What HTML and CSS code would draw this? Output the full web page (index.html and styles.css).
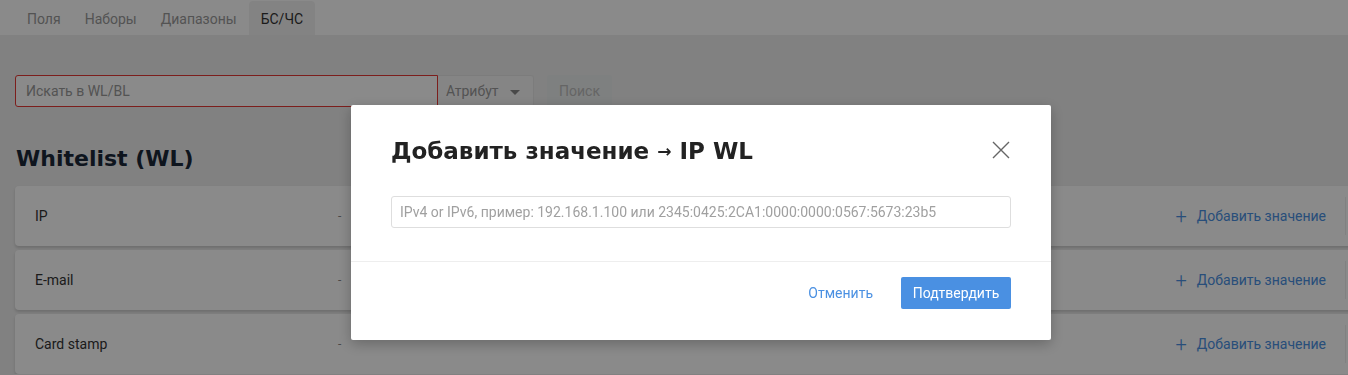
FILE: index.html
```html
<!DOCTYPE html>
<html lang="ru">
<head>
  <meta charset="UTF-8" />
  <meta name="viewport" content="width=device-width, initial-scale=1.0"/>
  <title>БС/ЧС</title>
  <link rel="stylesheet" href="styles.css">
</head>
<body>

  <!-- Tabs -->
  <nav class="tabs">
    <a class="tab">Поля</a>
    <a class="tab">Наборы</a>
    <a class="tab">Диапазоны</a>
    <a class="tab active">БС/ЧС</a>
  </nav>

  <main class="content">
    <div class="search-row">
      <input class="search-input" type="text" placeholder="Искать в WL/BL" />
      <button class="attr-select">Атрибут <span class="caret"></span></button>
      <button class="search-btn" disabled>Поиск</button>
    </div>

    <h1 class="list-title">Whitelist (WL)</h1>

    <div class="list">
      <div class="list-row">
        <span class="row-name">IP</span>
        <span class="row-value">-</span>
        <a class="add-link"><span class="plus">+</span> Добавить значение</a>
        <span class="row-sep"></span>
      </div>
      <div class="list-row">
        <span class="row-name">E-mail</span>
        <span class="row-value">-</span>
        <a class="add-link"><span class="plus">+</span> Добавить значение</a>
        <span class="row-sep"></span>
      </div>
      <div class="list-row">
        <span class="row-name">Card stamp</span>
        <span class="row-value">-</span>
        <a class="add-link"><span class="plus">+</span> Добавить значение</a>
        <span class="row-sep"></span>
      </div>
    </div>
  </main>

  <!-- Modal -->
  <div class="overlay"></div>
  <div class="modal">
    <div class="modal-header">
      <h2 class="modal-title">Добавить значение <span class="arrow">→</span> IP WL</h2>
      <button class="modal-close" aria-label="Закрыть">
        <svg width="20" height="20" viewBox="0 0 20 20">
          <path d="M2 2 L18 18 M18 2 L2 18" stroke="#666" stroke-width="1.4" fill="none"/>
        </svg>
      </button>
    </div>
    <div class="modal-body">
      <input class="modal-input" type="text" placeholder="IPv4 or IPv6, пример: 192.168.1.100 или 2345:0425:2CA1:0000:0000:0567:5673:23b5" />
    </div>
    <div class="modal-footer">
      <button class="btn-cancel">Отменить</button>
      <button class="btn-confirm">Подтвердить</button>
    </div>
  </div>

</body>
</html>
```

FILE: styles.css
```css
body {
  font-family: Roboto, "Liberation Sans", sans-serif;
  font-size: 14px;
  background: #eeeeee;
  margin: 0;
  padding: 0;
  color: #333;
  overflow: hidden;
}
.tabs {
  display: flex;
  height: 35px;
  background: #fff;
  padding-left: 15px;
  align-items: flex-end;
}
.tab {
  padding: 0 12px;
  height: 34px;
  line-height: 36px;
  color: #9a9a9a;
  border-radius: 4px 4px 0 0;
}
.active {
  background: #f3f3f3;
  color: #333;
}
.content {
  padding: 40px 15px 0 15px;
}
.search-row {
  display: flex;
  height: 32px;
}
.search-input {
  width: 423px;
  box-sizing: border-box;
  border: 1px solid #e53935;
  border-radius: 3px 0 0 3px;
  padding: 0 10px;
  font: inherit;
  background: #fff;
}
.search-input::placeholder { color: #999; }
.attr-select {
  width: 96px;
  border: 1px solid #e6e6e6;
  border-left: none;
  background: #f6f6f6;
  font: inherit;
  color: #999;
  text-align: left;
  padding: 0 10px 0 8px;
  border-radius: 0 3px 3px 0;
}
.caret {
  display: inline-block;
  margin-left: 8px;
  border-left: 5px solid transparent;
  border-right: 5px solid transparent;
  border-top: 5px solid #888;
  vertical-align: middle;
}
.search-btn {
  margin-left: 13px;
  width: 65px;
  border: none;
  border-radius: 2px;
  background: #e9ecec;
  font: inherit;
  color: #bbb;
}
.list-title {
  font-family: "DejaVu Sans", sans-serif;
  font-weight: bold;
  font-size: 22px;
  color: #1b2838;
  margin: 39px 0 15px 1px;
  letter-spacing: 0;
}
.list {
  display: flex;
  flex-direction: column;
  gap: 4px;
  margin-right: -40px;
}
.list-row {
  display: flex;
  align-items: center;
  height: 60px;
  background: #fff;
  border-radius: 4px;
  box-shadow: 0 2px 3px rgba(0,0,0,0.15);
  padding-left: 20px;
}
.row-name {
  width: 303px;
  color: #333;
}
.row-value {
  color: #888;
  font-size: 12px;
}
.add-link {
  margin-left: auto;
  color: #4a90e2;
  display: flex;
  align-items: center;
  gap: 10px;
}
.plus {
  font-size: 20px;
  font-weight: 300;
  line-height: 1;
}
.row-sep {
  width: 1px;
  height: 38px;
  background: #eee;
  margin: 0 27px 0 19px;
}
.overlay {
  position: fixed;
  inset: 0;
  background: rgba(0,0,0,0.46);
}
.modal {
  position: fixed;
  top: 105px;
  left: 351px;
  width: 700px;
  height: 235px;
  background: #fff;
  border-radius: 2px;
  box-shadow: 0 4px 14px rgba(0,0,0,0.25);
}
.modal-header {
  display: flex;
  align-items: center;
  justify-content: space-between;
  padding: 33px 39px 0 40px;
}
.modal-title {
  margin: 0;
  font-family: "DejaVu Sans", sans-serif;
  font-weight: bold;
  font-size: 23px;
  color: #222;
  letter-spacing: 0;
}
.arrow {
  font-size: 17px;
  vertical-align: 2px;
}
.modal-close {
  background: none;
  border: none;
  padding: 0;
  width: 22px;
  height: 22px;
}
.modal-body {
  padding: 32px 40px 33px 40px;
  border-bottom: 1px solid #eee;
}
.modal-input {
  width: 100%;
  box-sizing: border-box;
  height: 32px;
  border: 1px solid #dedede;
  border-radius: 3px;
  padding: 0 8px;
  font: inherit;
}
.modal-input::placeholder { color: #a0a0a0; }
.modal-footer {
  display: flex;
  justify-content: flex-end;
  align-items: center;
  gap: 12px;
  padding: 15px 40px 0 40px;
}
.btn-cancel {
  background: none;
  border: none;
  font: inherit;
  color: #4a90e2;
  padding: 0 16px;
  height: 32px;
}
.btn-confirm {
  background: #4a90e2;
  border: none;
  border-radius: 2px;
  font: inherit;
  color: #fff;
  width: 110px;
  height: 32px;
}
```
